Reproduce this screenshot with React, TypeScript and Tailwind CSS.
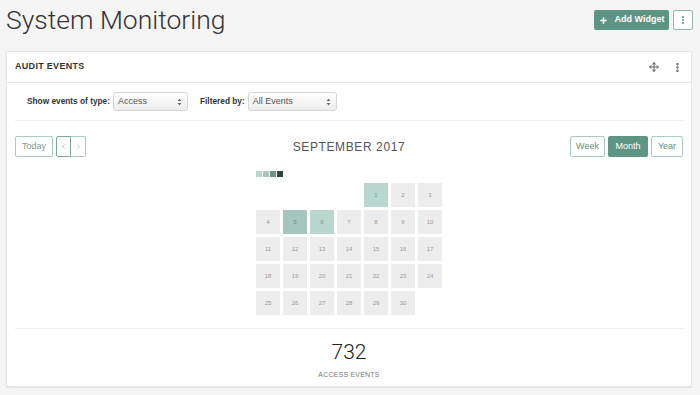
import { Plus, Move, EllipsisVertical, ChevronLeft, ChevronRight } from "lucide-react";

const font = { fontFamily: '"Liberation Sans", Arial, sans-serif' };

// day -> intensity level (0 = none)
const levels: Record<number, number> = { 1: 1, 5: 2, 6: 1 };

function cellClass(level: number) {
  if (level === 2) return "bg-[#a5c5bd] text-[#6f8c85]";
  if (level === 1) return "bg-[#b9d6cf] text-[#7a9891]";
  return "bg-[#ededed] text-[#9a9a9a]";
}

function SelectBox({ value, width }: { value: string; width: string }) {
  return (
    <div
      className={`flex h-[19px] ${width} items-center justify-between rounded-[3px] border border-[#d6d6d6] bg-gradient-to-b from-white to-[#ececec] pl-[4px] pr-[5px] text-[9px] font-normal text-[#555]`}
    >
      <span>{value}</span>
      <svg width="5" height="8" viewBox="0 0 5 8" className="text-[#666]">
        <path d="M0.5 3 L2.5 0.8 L4.5 3Z M0.5 5 L2.5 7.2 L4.5 5Z" fill="currentColor" />
      </svg>
    </div>
  );
}

export default function App() {
  const blanks = 4;
  const days = Array.from({ length: 30 }, (_, i) => i + 1);

  return (
    <div className="h-[395px] w-[700px] overflow-hidden bg-[#f5f5f5]" style={font}>
      <div className="flex h-[51px] items-start justify-between pl-[6px] pr-[7px]">
        <h1
          className="pt-[5px] text-[26.5px] leading-[30px] font-light text-[#333]"
          style={{ fontFamily: 'Roboto, "Liberation Sans", sans-serif' }}
        >
          System Monitoring
        </h1>
        <div className="mt-[10px] flex gap-[4px]">
          <button className="flex h-[20px] w-[75px] items-center justify-center gap-[7px] rounded-[2px] bg-[#5e9484] text-[9px] font-bold text-white">
            <Plus className="h-[9px] w-[9px]" strokeWidth={4} />
            Add Widget
          </button>
          <button className="flex h-[20px] w-[20px] items-center justify-center rounded-[2px] border border-[#8fb9ad] bg-white text-[#5e9484]">
            <EllipsisVertical className="h-[10px] w-[10px]" strokeWidth={3} />
          </button>
        </div>
      </div>

      <div className="mx-[6px] mr-[8px] h-[336px] rounded-[2px] border border-[#e6e6e6] bg-white shadow-[0_1px_1px_rgba(0,0,0,0.08)]">
        <div className="flex h-[31px] items-center justify-between border-b border-[#e6e6e6] pl-[8px] pr-[8px]">
          <span className="text-[9px] font-bold tracking-[0.3px] text-[#333]">AUDIT EVENTS</span>
          <div className="flex items-center gap-[13px] text-[#666]">
            <Move className="h-[10px] w-[10px]" strokeWidth={2.5} />
            <EllipsisVertical className="h-[11px] w-[11px]" strokeWidth={3.5} />
          </div>
        </div>

        <div className="px-[8px]">
          <div className="flex h-[38px] items-center border-b border-[#ececec] pl-[12px] text-[8.3px] font-bold text-[#333]">
            <span className="mr-[3px]">Show events of type:</span>
            <SelectBox value="Access" width="w-[75px]" />
            <span className="ml-[12px] mr-[3px]">Filtered by:</span>
            <SelectBox value="All Events" width="w-[89px]" />
          </div>

          <div className="mt-[15px] grid h-[21px] grid-cols-[1fr_auto_1fr] items-center">
            <div className="flex items-center gap-[3px]">
              <button className="h-[21px] w-[38px] rounded-[2px] border border-[#a9cbc1] text-[9px] text-[#7a9e94]">
                Today
              </button>
              <div className="flex h-[21px]">
                <button className="flex w-[15px] items-center justify-center rounded-l-[2px] border border-[#7fa89c] text-[#5e8e80]">
                  <ChevronLeft className="h-[7px] w-[7px]" strokeWidth={2} />
                </button>
                <button className="flex w-[15px] items-center justify-center rounded-r-[2px] border border-l-0 border-[#a9cbc1] text-[#8fb0a7]">
                  <ChevronRight className="h-[7px] w-[7px]" strokeWidth={2} />
                </button>
              </div>
            </div>
            <span className="text-[12px] tracking-[0.6px] text-[#555]">SEPTEMBER 2017</span>
            <div className="flex justify-end gap-[3px]">
              <button className="h-[21px] w-[35px] rounded-[2px] border border-[#a9cbc1] text-[9px] text-[#5e8e80]">
                Week
              </button>
              <button className="h-[21px] w-[40px] rounded-[2px] bg-[#5e9484] text-[9px] text-white">
                Month
              </button>
              <button className="h-[21px] w-[32px] rounded-[2px] border border-[#a9cbc1] text-[9px] text-[#5e8e80]">
                Year
              </button>
            </div>
          </div>

          <div className="flex flex-col items-center">
            <div className="mt-[14px] flex w-[186px] gap-[1px]">
              <span className="h-[6px] w-[6px] bg-[#b9d6cf]" />
              <span className="h-[6px] w-[6px] bg-[#a5c5bd]" />
              <span className="h-[6px] w-[6px] bg-[#6f8f87]" />
              <span className="h-[6px] w-[6px] bg-[#2e4540]" />
            </div>
            <div className="mt-[6px] grid grid-cols-[repeat(7,24px)] gap-[3px]">
              {Array.from({ length: blanks }).map((_, i) => (
                <div key={`b${i}`} className="h-[24px] w-[24px]" />
              ))}
              {days.map((d) => (
                <div
                  key={d}
                  className={`flex h-[24px] w-[24px] items-center justify-center text-[6px] ${cellClass(levels[d] ?? 0)}`}
                >
                  {d}
                </div>
              ))}
            </div>
          </div>

          <div className="mt-[13px] flex h-[57px] flex-col items-center border-t border-[#ececec]">
            <span
              className="mt-[11px] text-[21px] leading-[24px] font-light text-[#222]"
              style={{ fontFamily: 'Roboto, "Liberation Sans", sans-serif' }}
            >
              732
            </span>
            <span className="mt-[6px] text-[7px] tracking-[0.2px] text-[#777]">ACCESS EVENTS</span>
          </div>
        </div>
      </div>
    </div>
  );
}
